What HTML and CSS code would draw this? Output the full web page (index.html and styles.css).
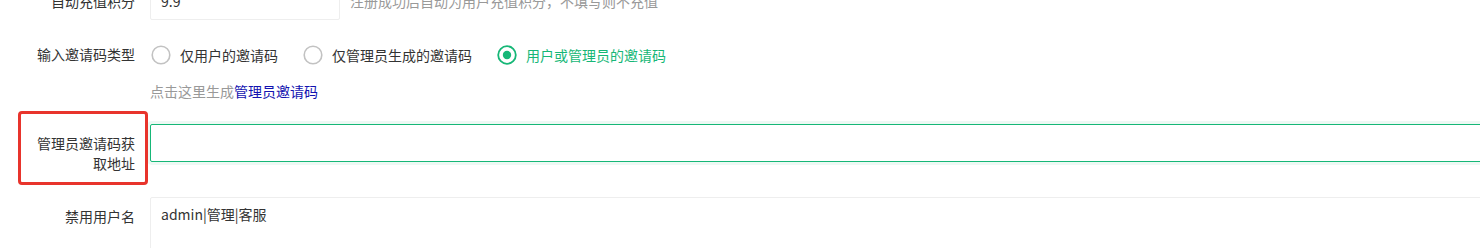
FILE: index.html
```html
<!DOCTYPE html>
<html lang="zh-CN">
<head>
<meta charset="utf-8">
<title>邀请码设置</title>
<link rel="stylesheet" href="styles.css">
</head>
<body>
<form class="form">
  <div class="item">
    <label class="label">自动充值积分</label>
    <div class="inline-row">
      <div class="input-inline"><input class="input" type="text" value="9.9"></div>
      <div class="aux">注册成功后自动为用户充值积分，不填写则不充值</div>
    </div>
  </div>

  <div class="item">
    <label class="label">输入邀请码类型</label>
    <div class="block">
      <div class="radios">
        <div class="radio">
          <svg class="ico" viewBox="0 0 22 22"><circle cx="11" cy="11" r="8.8" fill="none" stroke="#c2c2c2" stroke-width="1.6"/></svg>
          <span>仅用户的邀请码</span>
        </div>
        <div class="radio">
          <svg class="ico" viewBox="0 0 22 22"><circle cx="11" cy="11" r="8.8" fill="none" stroke="#c2c2c2" stroke-width="1.6"/></svg>
          <span>仅管理员生成的邀请码</span>
        </div>
        <div class="radio checked">
          <svg class="ico" viewBox="0 0 22 22"><circle cx="11" cy="11" r="8.8" fill="none" stroke="#16b777" stroke-width="1.8"/><circle cx="11" cy="11" r="4.2" fill="#16b777"/></svg>
          <span>用户或管理员的邀请码</span>
        </div>
      </div>
      <div class="hint">点击这里生成<a class="link" href="#">管理员邀请码</a></div>
    </div>
  </div>

  <div class="item marked">
    <label class="label">管理员邀请码获取地址</label>
    <div class="block">
      <input class="input focus" type="text" value="">
    </div>
    <div class="annot"></div>
  </div>

  <div class="item">
    <label class="label">禁用用户名</label>
    <div class="block">
      <textarea class="textarea">admin|管理|客服</textarea>
    </div>
  </div>
</form>
</body>
</html>
```

FILE: styles.css
```css
html, body {
  margin: 0;
  padding: 0;
  overflow: hidden;
  background: #fff;
}
body {
  font-family: "Noto Sans CJK SC", "Microsoft YaHei", sans-serif;
  font-size: 14px;
  color: #333;
}
.form {
  width: 1600px;
  margin-top: -18px;
  padding-left: 10px;
}
.item {
  display: flex;
  align-items: flex-start;
  margin-bottom: 15px;
}
.label {
  flex: 0 0 110px;
  width: 110px;
  padding: 9px 15px;
  line-height: 20px;
  text-align: right;
  color: #333;
}
.inline-row {
  display: flex;
  align-items: flex-start;
}
.input-inline {
  width: 190px;
  margin-right: 10px;
}
.input {
  box-sizing: border-box;
  display: block;
  width: 100%;
  height: 38px;
  padding: 0 10px;
  border: 1px solid #eee;
  border-radius: 2px;
  font: inherit;
  font-size: 14px;
  color: #333;
  background: #fff;
  outline: none;
}
.input.focus {
  border-color: #16b777;
  box-shadow: 0 0 0 3px rgba(22, 183, 119, 0.08);
}
.aux {
  padding: 9px 0;
  line-height: 20px;
  color: #999;
}
.block {
  flex: 1;
  min-width: 0;
}
.radios {
  display: flex;
  align-items: center;
  margin-top: 6px;
  height: 28px;
}
.radio {
  display: flex;
  align-items: center;
  gap: 8px;
  padding-right: 10px;
  margin-right: 14px;
  line-height: 28px;
  color: #333;
}
.radio.checked {
  color: #16b777;
}
.ico {
  width: 22px;
  height: 22px;
  display: block;
}
.hint {
  margin-top: 12px;
  margin-bottom: 8px;
  line-height: 20px;
  color: #999;
}
.link {
  color: #1212b0;
  text-decoration: none;
}
.marked {
  position: relative;
}
.annot {
  position: absolute;
  left: 8px;
  top: -13px;
  width: 130px;
  height: 74px;
  box-sizing: border-box;
  border: 3px solid #e8342c;
  border-radius: 4px;
}
.textarea {
  box-sizing: border-box;
  display: block;
  width: 100%;
  min-height: 100px;
  padding: 6px 10px;
  border: 1px solid #eee;
  border-radius: 2px;
  font: inherit;
  font-size: 14px;
  line-height: 20px;
  color: #333;
  resize: none;
  outline: none;
}
```
